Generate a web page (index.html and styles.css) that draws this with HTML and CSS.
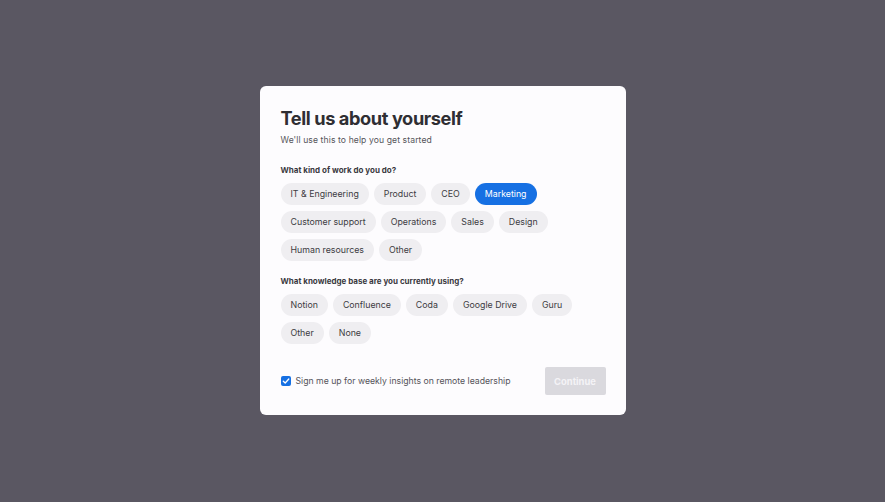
FILE: index.html
```html
<!DOCTYPE html>
<html>
<head>
<meta charset="utf-8">
<link rel="stylesheet" href="styles.css">
</head>
<body>
<div class="overlay">
  <div class="modal">
    <h1 class="title">Tell us about yourself</h1>
    <p class="subtitle">We'll use this to help you get started</p>

    <div class="section">
      <div class="label">What kind of work do you do?</div>
      <div class="chips">
        <span class="chip">IT &amp; Engineering</span>
        <span class="chip">Product</span>
        <span class="chip">CEO</span>
        <span class="chip active">Marketing</span>
        <span class="chip">Customer support</span>
        <span class="chip">Operations</span>
        <span class="chip">Sales</span>
        <span class="chip">Design</span>
        <span class="chip">Human resources</span>
        <span class="chip">Other</span>
      </div>
    </div>

    <div class="section">
      <div class="label">What knowledge base are you currently using?</div>
      <div class="chips">
        <span class="chip">Notion</span>
        <span class="chip">Confluence</span>
        <span class="chip">Coda</span>
        <span class="chip">Google Drive</span>
        <span class="chip">Guru</span>
        <span class="chip">Other</span>
        <span class="chip">None</span>
      </div>
    </div>

    <div class="footer">
      <label class="check">
        <span class="box"><svg width="8" height="8" viewBox="0 0 8 8"><path d="M1.3 4.2 L3.2 6 L6.8 2" fill="none" stroke="#fff" stroke-width="1.3" stroke-linecap="round" stroke-linejoin="round"/></svg></span>
        <span class="check-text">Sign me up for weekly insights on remote leadership</span>
      </label>
      <button class="btn">Continue</button>
    </div>
  </div>
</div>
</body>
</html>
```

FILE: styles.css
```css
* { box-sizing: border-box; }
html, body { margin: 0; padding: 0; }
body {
  font-family: Inter, "Noto Sans", sans-serif;
  background: #5a5762;
  width: 885px;
  height: 502px;
  overflow: hidden;
}
.overlay {
  width: 885px;
  height: 502px;
  display: flex;
  align-items: center;
  justify-content: center;
  padding-bottom: 1px;
}
.modal {
  width: 366px;
  height: 329px;
  background: #fdfcfe;
  border-radius: 6px;
  padding: 21px 20px 20px 21px;
  display: flex;
  flex-direction: column;
}
.title {
  margin: 0;
  font-size: 18.2px;
  line-height: 22px;
  font-weight: 700;
  color: #2f2e33;
  letter-spacing: -0.4px;
}
.subtitle {
  margin: 4px 0 0;
  font-size: 8.6px;
  line-height: 14px;
  color: #55545a;
  letter-spacing: 0.1px;
}
.section { margin-top: 17px; }
.section + .section { margin-top: 14px; }
.label {
  font-size: 8px;
  line-height: 12px;
  font-weight: 700;
  color: #3a393e;
}
.chips {
  margin-top: 7px;
  display: flex;
  flex-wrap: wrap;
  gap: 6px 5px;
}
.chip {
  height: 22px;
  line-height: 22px;
  padding: 0 10px;
  border-radius: 11px;
  background: #efeef1;
  color: #3d3c42;
  font-size: 8.8px;
  white-space: nowrap;
}
.chip.active {
  background: #1670e3;
  color: #ffffff;
}
.footer {
  margin-top: auto;
  display: flex;
  align-items: center;
  justify-content: space-between;
}
.check {
  display: flex;
  align-items: center;
  gap: 5px;
}
.box {
  width: 10px;
  height: 10px;
  border-radius: 2px;
  background: #1670e3;
  display: flex;
  align-items: center;
  justify-content: center;
}
.check-text {
  font-size: 8.7px;
  color: #55545a;
}
.btn {
  width: 61px;
  height: 28px;
  border: 0;
  border-radius: 2px;
  background: #dad9de;
  color: #f4f3f6;
  font-family: Inter, "Noto Sans", sans-serif;
  font-size: 9.4px;
  font-weight: 700;
  padding: 0;
}
```
